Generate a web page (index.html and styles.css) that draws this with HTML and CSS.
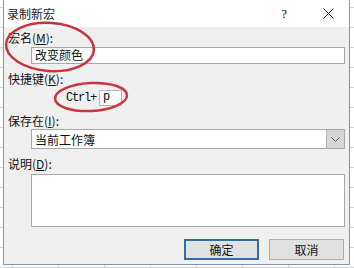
FILE: index.html
```html
<!DOCTYPE html>
<html lang="zh-CN">
<head>
    <meta charset="UTF-8">
    <title>录制新宏</title>
    <link rel="stylesheet" href="styles.css">
</head>
<body>
    <div class="sheet">
        <div class="dialog">
            <div class="titlebar">
                <span class="title">录制新宏</span>
                <span class="help">?</span>
                <svg class="close" width="11" height="11" viewBox="0 0 11 11">
                    <path d="M0.5 0.5 L10.5 10.5 M10.5 0.5 L0.5 10.5" stroke="#222" stroke-width="1"/>
                </svg>
            </div>

            <div class="content">
                <div class="label first">宏名(<u>M</u>):</div>
                <div class="field name">改变颜色</div>

                <div class="label">快捷键(<u>K</u>):</div>
                <div class="shortcut">
                    <span class="ctrl">Ctrl+</span>
                    <span class="key">p</span>
                </div>

                <div class="label">保存在(<u>I</u>):</div>
                <div class="field combo">
                    <span class="combo-text">当前工作簿</span>
                    <span class="combo-btn">
                        <svg width="9" height="5" viewBox="0 0 9 5">
                            <path d="M0.5 0.5 L4.5 4.5 L8.5 0.5" fill="none" stroke="#555" stroke-width="1"/>
                        </svg>
                    </span>
                </div>

                <div class="label">说明(<u>D</u>):</div>
                <div class="field memo"></div>

                <div class="buttons">
                    <button class="btn default" type="button">确定</button>
                    <button class="btn" type="button">取消</button>
                </div>
            </div>

            <!-- red marks drawn over the screenshot -->
            <svg class="marks" width="354" height="268" viewBox="0 0 354 268">
                <ellipse cx="49" cy="47" rx="44" ry="24" transform="rotate(4 49 47)" fill="none" stroke="#c9343d" stroke-width="2.5"/>
                <ellipse cx="90" cy="97" rx="36" ry="14" transform="rotate(-3 90 97)" fill="none" stroke="#c9343d" stroke-width="2.5"/>
            </svg>
        </div>
    </div>
</body>
</html>
```

FILE: styles.css
```css
body {
    margin: 0;
    font-family: "Noto Sans CJK SC", "Liberation Sans", sans-serif;
    font-size: 12px;
    color: #111;
}

.sheet {
    width: 354px;
    height: 268px;
    overflow: hidden;
    background-color: #fff;
    background-image:
        linear-gradient(#d4d4d4 1px, transparent 1px),
        linear-gradient(90deg, #d4d4d4 1px, transparent 1px);
    background-size: 46px 20px;
    background-position: 12px 7px;
}

.dialog {
    position: relative;
    margin-left: 3px;
    width: 345px;
    height: 264px;
    border: 1px solid #7b97b2;
    border-top: none;
    background: #f0f0f0;
    display: flex;
    flex-direction: column;
}

.titlebar {
    height: 27px;
    background: #fff;
    display: flex;
    align-items: center;
    padding-left: 3px;
}

.title {
    flex: 1;
    font-size: 12px;
    color: #222;
}

.help {
    font-family: "Liberation Serif", serif;
    font-size: 13px;
    margin-right: 36px;
}

.close {
    margin-right: 15px;
}

.content {
    padding: 4px 4px 0 4px;
    display: flex;
    flex-direction: column;
}

.label {
    height: 14px;
    line-height: 14px;
    margin-top: 8px;
}

.label.first {
    margin-top: 0;
}

.field {
    margin-left: 23px;
    background: #fff;
    border: 1px solid #a8a8a8;
    box-sizing: border-box;
}

.name {
    margin-top: 2px;
    height: 17px;
    line-height: 14px;
    font-size: 12px;
    padding-left: 3px;
}

.shortcut {
    display: flex;
    align-items: center;
    margin-top: 4px;
    padding-left: 58px;
}

.ctrl {
    font-family: "Liberation Mono", monospace;
    font-size: 12px;
    letter-spacing: -1.2px;
    width: 33px;
}

.key {
    width: 23px;
    height: 16px;
    box-sizing: border-box;
    background: #fff;
    border: 1px solid #b8b8b8;
    font-family: "Liberation Mono", monospace;
    font-size: 12px;
    line-height: 12px;
    padding-left: 3px;
}

.combo {
    margin-top: 1px;
    height: 20px;
    display: flex;
    align-items: center;
}

.combo-text {
    flex: 1;
    padding-left: 3px;
}

.combo-btn {
    width: 17px;
    height: 18px;
    background: #d6d6d6;
    border-left: 1px solid #b8b8b8;
    display: flex;
    align-items: center;
    justify-content: center;
}

.memo {
    margin-top: 3px;
    height: 53px;
}

.buttons {
    display: flex;
    justify-content: flex-end;
    gap: 10px;
    margin-top: 12px;
    padding-right: 1px;
}

.btn {
    width: 75px;
    height: 21px;
    font-family: "Noto Sans CJK SC", sans-serif;
    font-size: 12px;
    color: #111;
    background: #e1e1e1;
    border: 1px solid #adadad;
    padding: 0;
}

.btn.default {
    border: 2px solid #2f6ea5;
}

.marks {
    position: absolute;
    left: -3px;
    top: 0;
    pointer-events: none;
}
```
